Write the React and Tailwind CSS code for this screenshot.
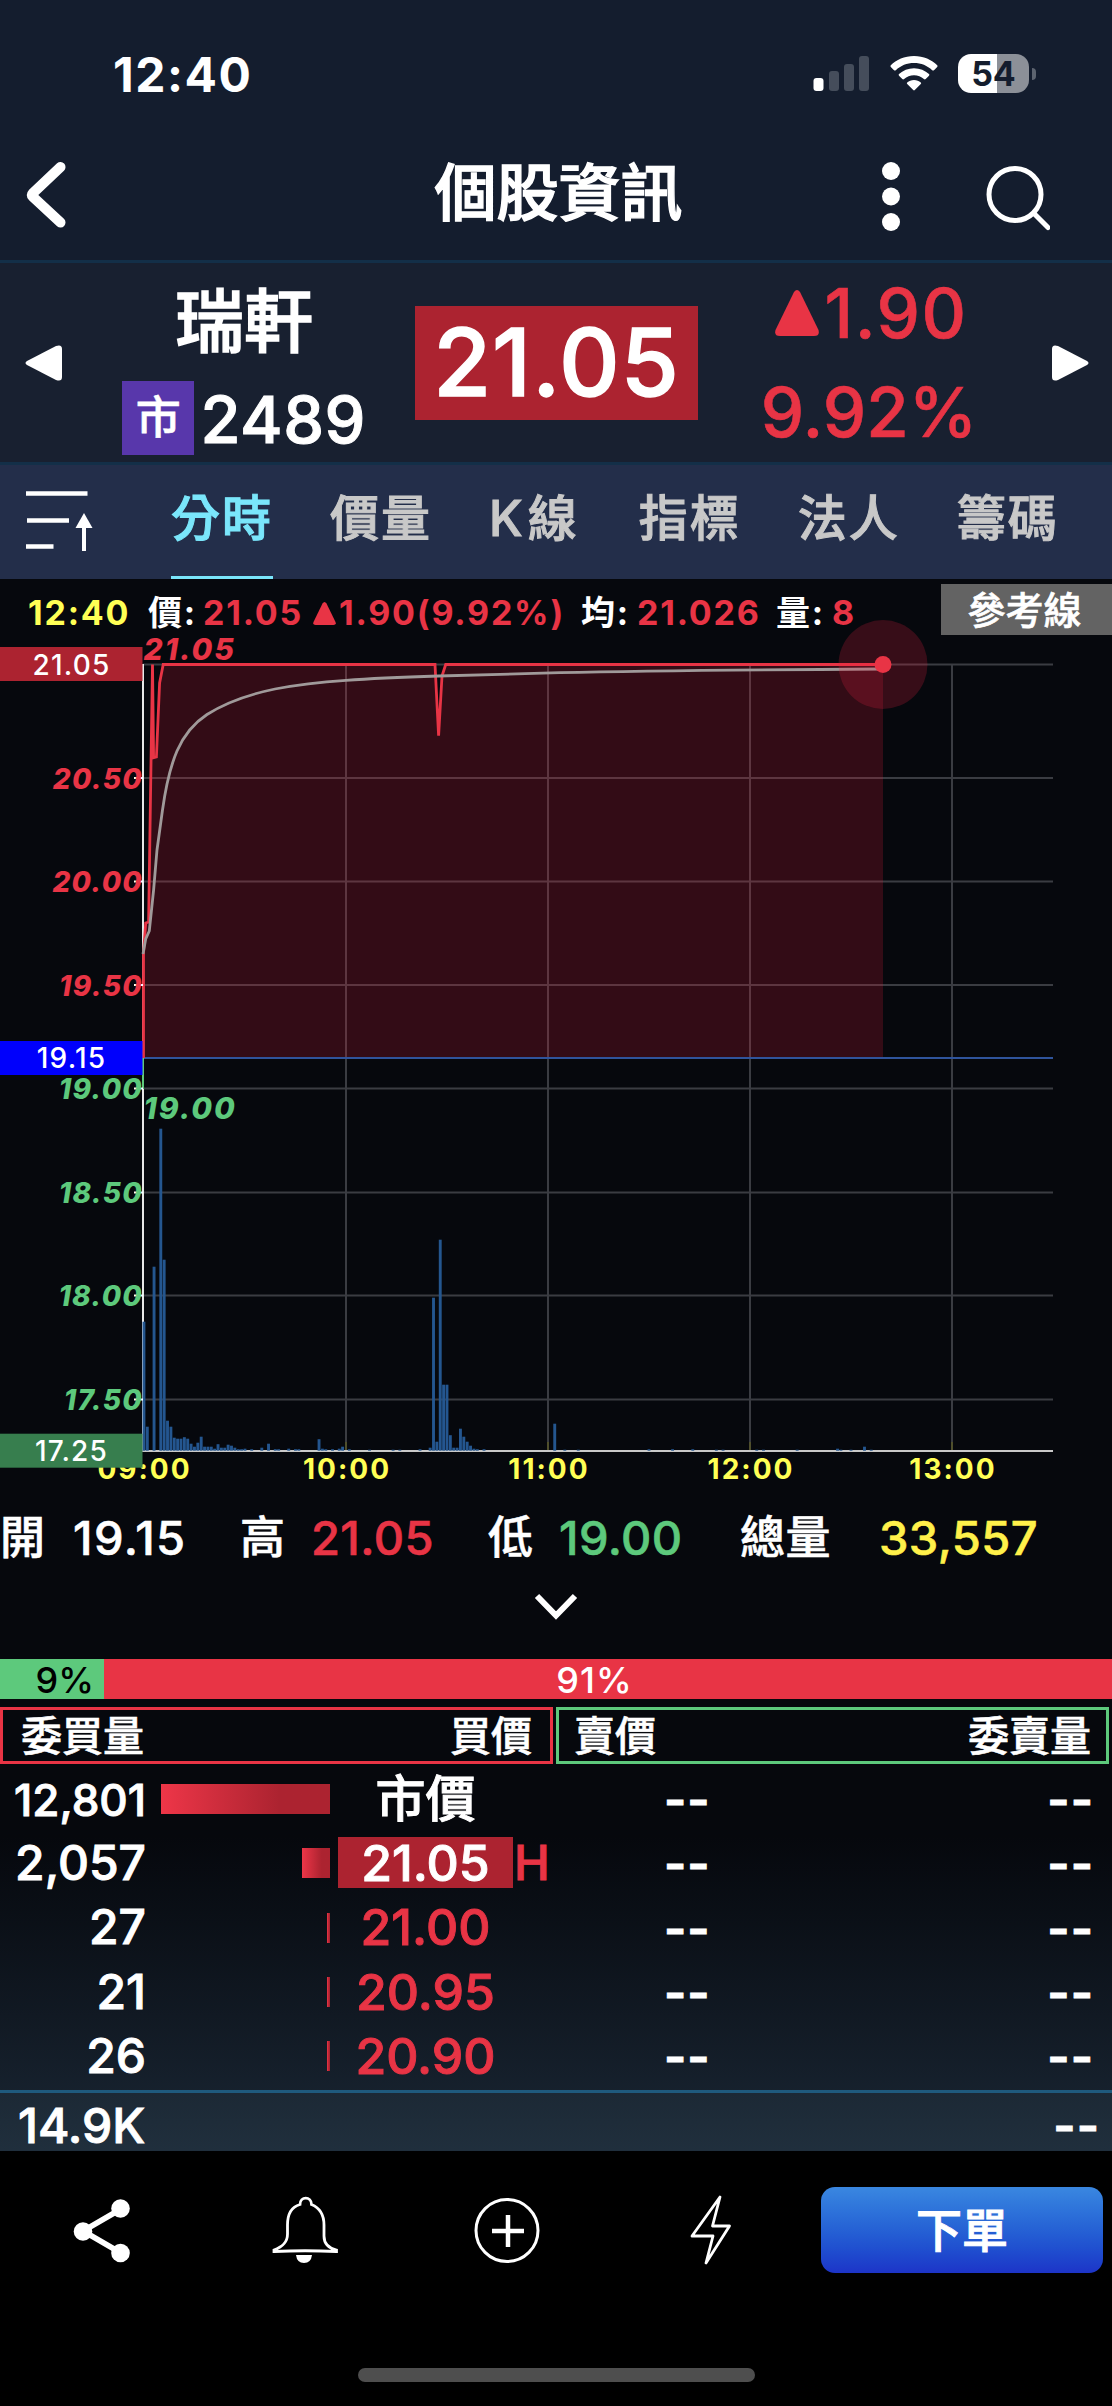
const minuteWidth = 3.367;
const baseline = 1450.7;

const gridRows = [
  { y: 664.5, label: null },
  { y: 778, label: '20.50', up: true },
  { y: 881.5, label: '20.00', up: true },
  { y: 985, label: '19.50', up: true },
  { y: 1088.5, label: '19.00' },
  { y: 1192.5, label: '18.50' },
  { y: 1295.5, label: '18.00' },
  { y: 1399.5, label: '17.50' },
];

const hours = [
  { x: 143.5, label: '09:00' },
  { x: 346, label: '10:00' },
  { x: 548, label: '11:00' },
  { x: 750, label: '12:00' },
  { x: 952, label: '13:00' },
];

// [minute after 09:00, bar height in px]
const volumes = [
  [0, 129], [1, 24], [3, 184], [5, 322], [6, 191], [7, 30], [8, 24], [9, 13], [10, 12], [11, 12],
  [12, 13.5], [13, 12], [14, 7], [15, 4], [16, 8], [17, 14], [18, 4], [19, 4], [20, 4], [21, 2],
  [22, 6.5], [23, 3], [24, 3], [25, 6], [26, 5], [27, 3], [28, 1.5], [29, 1.5], [30, 2], [32, 1.5],
  [35, 3], [37, 7], [39, 1.5], [40, 1.5], [43, 2], [45, 1.5], [46, 1.5], [52, 11.5], [53, 2], [54, 1.5],
  [56, 1.5], [58, 2], [59, 4], [61, 1.5], [67, 1], [74, 1], [76, 1], [82, 1.5], [85, 3], [86, 153],
  [87, 9], [88, 211], [89, 66], [90, 66], [91, 15.5], [92, 3], [93, 3], [94, 22], [95, 14], [96, 9],
  [97, 5], [98, 2], [99, 1.5], [101, 1.5], [122, 27], [125, 1], [129, 1], [150, 1.5], [157, 1.5],
  [163, 1.5], [170, 1], [172, 1], [182, 1], [184, 1], [194, 1], [206, 2], [207, 1], [210, 1], [214, 4],
  [216, 1],
];

const pricePoints =
  '143.5,1058 143.5,953 145.7,923 148.6,922 152.5,664.5 153.6,757.7 156.4,757 159.6,683 163.2,664.5 435,664.5 438.6,735.7 442,676 445.7,664.5 883,664.5';

const averagePath =
  'M143 954L145.7 939L149.3 931L153.6 890L157 850L162.5 810C166 785 171 765 177 751C184 735 194 723 207 714.5C222 705 246 695 275 689C298 684.5 320 682 346 680.3C378 678 408 677 438.6 676C480 674.5 520 673.5 560 672.7C630 671 700 670 883 669';

const tabs = ['分時', '價量', 'K線', '指標', '法人', '籌碼'];

const bids = [
  { volume: '12,801', price: '市價', bar: 'w-[169px]' },
  { volume: '2,057', price: '21.05', bar: 'w-[28px]', limit: true },
  { volume: '27', price: '21.00', bar: 'w-[3px]' },
  { volume: '21', price: '20.95', bar: 'w-[3px]' },
  { volume: '26', price: '20.90', bar: 'w-[3px]' },
];

function StatusBar() {
  return (
    <div className="flex h-[148px] items-start justify-between pl-[113px] pr-[76px]">
      <span className="mt-[46px] text-[48px] font-bold leading-[58px] tracking-[1.5px]">12:40</span>
      <div className="mt-[54px] flex items-start">
        <svg width="58" height="40" viewBox="0 0 58 40" className="mr-[19px]">
          <rect x="0.5" y="24" width="10" height="13" rx="3" fill="#fff" />
          <rect x="16" y="17" width="10" height="20" rx="3" fill="#454d5b" />
          <rect x="31" y="10" width="10" height="27" rx="3" fill="#454d5b" />
          <rect x="46" y="2" width="10" height="35" rx="3" fill="#454d5b" />
        </svg>
        <svg width="48" height="37" viewBox="0 0 48 37" className="mr-5">
          <path d="M24 2C14.5 2 6.200 5.800 0.800 11.200Q0 12 0.800 12.900L4 16.200Q4.900 17 5.800 16.200C10.600 11.600 16.900 9 24 9S37.400 11.600 42.200 16.200Q43.100 17 44 16.200L47.200 12.900Q48 12 47.200 11.200C41.800 5.800 33.500 2 24 2Z" fill="#fff" />
          <path d="M24 14.200C18.200 14.200 12.900 16.400 9 20Q8.200 20.900 9 21.700L12.300 25Q13.200 25.800 14.100 25C16.700 22.700 20.200 21.200 24 21.200S31.300 22.700 33.900 25Q34.800 25.800 35.700 25L39 21.700Q39.800 20.900 39 20C35.100 16.400 29.800 14.200 24 14.200Z" fill="#fff" />
          <path d="M24 26C21.300 26 19 26.900 17.200 28.400Q16.400 29.200 17.200 30L23.200 36Q24 36.800 24.800 36L30.800 30Q31.600 29.200 30.800 28.400C29 26.900 26.700 26 24 26Z" fill="#fff" />
        </svg>
        <div className="flex items-center gap-[3px]">
          <div className="flex h-[39px] w-[71px] items-center justify-center rounded-[13px] bg-linear-to-r from-white from-55% to-[#8c9098] to-55% text-[34px] font-bold text-[#141d2e]">
            54
          </div>
          <div className="h-3 w-1 rounded-r-full bg-[#5d6470]" />
        </div>
      </div>
    </div>
  );
}

function TitleBar() {
  return (
    <header className="flex h-[112px] items-center justify-between pb-4 pl-6 pr-[62px]">
      <svg width="200" height="72" viewBox="0 0 200 72">
        <path d="M36.500 7L8.500 33.500Q7 35 8.500 36.500L36.500 62.500" fill="none" stroke="#fff" strokeWidth="10" strokeLinecap="round" strokeLinejoin="round" />
      </svg>
      <h1 className="mb-1 ml-[13px] text-[62px] font-medium leading-none [-webkit-text-stroke:1.4px_currentColor]">個股資訊</h1>
      <svg width="170" height="72" viewBox="878 160 170 72">
        <circle cx="889" cy="171" r="9" fill="#fff" />
        <circle cx="889" cy="196.500" r="9" fill="#fff" />
        <circle cx="889" cy="222" r="9" fill="#fff" />
        <circle cx="1013" cy="194.500" r="26" fill="none" stroke="#fff" strokeWidth="5" />
        <path d="M1032 213.500L1046 227.500" stroke="#fff" strokeWidth="5" strokeLinecap="round" />
      </svg>
    </header>
  );
}

function Quote() {
  return (
    <section className="flex h-[205px] items-center border-y-3 border-[#132f48] bg-[#182030]">
      <svg width="37" height="36" viewBox="0 0 37 36" className="ml-[25px]">
        <path d="M2 16L31 1Q37 -1 37 4V32Q37 37 31 35L2 20Q-1 18 2 16Z" fill="#fff" />
      </svg>
      <div className="ml-[60px] flex w-[244px] flex-col items-center">
        <div className="pt-1.5 text-[69px] font-medium leading-[94px] [-webkit-text-stroke:1.4px_currentColor]">瑞軒</div>
        <div className="mt-2.5 flex w-full items-center">
          <span className="flex h-[74px] w-[74px] items-center justify-center bg-[#5837ab] text-[45px] font-medium [-webkit-text-stroke:0.6px_currentColor]">市</span>
          <span className="ml-[6px] pt-1 text-[65px] font-medium leading-[74px] tracking-[0.5px] [-webkit-text-stroke:1px_currentColor]">2489</span>
        </div>
      </div>
      <div className="ml-[49px] flex h-[114px] w-[283px] items-center justify-center bg-[#ac2330] text-[94px] font-medium tracking-[1px] [-webkit-text-stroke:1.4px_currentColor]">
        21.05
      </div>
      <div className="ml-[66px] flex w-[210px] flex-col items-center text-[69px] font-medium leading-[100px] text-[#e83445] [-webkit-text-stroke:0.6px_currentColor]">
        <div className="flex items-center gap-1.5 pl-1 tracking-[1.5px]">
          <svg width="44" height="46" viewBox="0 0 44 46">
            <path d="M19 2Q22 -2 25 2L43.500 40Q45 46 39 46H5Q-1 46 0.500 40Z" fill="#e83445" />
          </svg>
          1.90
        </div>
        <div className="-mt-[1px]">9.92%</div>
      </div>
      <svg width="37" height="36" viewBox="0 0 37 36" className="ml-[78px]">
        <path d="M35 16L6 1Q0 -1 0 4V32Q0 37 6 35L35 20Q38 18 35 16Z" fill="#fff" />
      </svg>
    </section>
  );
}

function Tabs() {
  return (
    <nav className="flex h-[114px] bg-[#232e4a]">
      <svg width="68" height="62" viewBox="25 490 68 62" className="ml-[25px] mt-[25px]">
        <path d="M26 493.500H87.500M27 520.500H69M26 546.500H53.500" stroke="#fff" strokeWidth="4.500" />
        <path d="M84 526V551" stroke="#fff" strokeWidth="4" />
        <path d="M84 513L92.500 528H75.500Z" fill="#fff" />
      </svg>
      <div className="ml-[78px] flex gap-[57px] text-[49px] font-medium text-[#c8c8c8] [-webkit-text-stroke:1px_currentColor]">
        {tabs.map((tab, i) => (
          <button
            key={tab}
            className={`h-[114px] border-b-3 pb-[3px] ${i === 2 ? 'tracking-[5px]' : 'tracking-[2px]'} ${
              i === 0 ? 'border-[#7ae6fb] text-[#7ae6fb]' : 'border-transparent'
            }`}
          >
            {tab}
          </button>
        ))}
      </div>
    </nav>
  );
}

function InfoRow() {
  return (
    <div className="flex h-[56px] justify-between pl-[28px] text-[34px] font-bold leading-[68px]">
      <div className="flex whitespace-nowrap tracking-[1.8px]">
        <span className="w-[120px] text-[#ffff55]">12:40</span>
        <span className="w-[55px]">價:</span>
        <span className="w-[110px] text-[#e83445]">21.05</span>
        <span className="flex w-[268px] text-[#e83445]">
          <svg width="23" height="23" viewBox="0 0 23 23" className="mr-[3px] mt-[23px]">
            <path d="M9.500 1.500Q11.500 -1.500 13.500 1.500L22.500 20Q23.500 23 20.500 23H2.500Q-0.500 23 0.500 20Z" fill="#e83445" />
          </svg>
          1.90(9.92%)
        </span>
        <span className="w-[56px]">均:</span>
        <span className="w-[139px] text-[#e83445]">21.026</span>
        <span className="w-[56px]">量:</span>
        <span className="text-[#e83445]">8</span>
      </div>
      <button className="mt-[5px] h-[51px] w-[171px] bg-[#636363] pr-1 text-[38px] font-medium leading-none [-webkit-text-stroke:0.6px_currentColor]">參考線</button>
    </div>
  );
}

function Chart() {
  return (
    <svg width="1112" height="865" viewBox="0 635 1112 865" className="block overflow-visible">
      {gridRows.map((row) => (
        <line key={row.y} x1="143" x2="1053" y1={row.y} y2={row.y} stroke="#3a3c42" strokeWidth="2" />
      ))}
      {hours.slice(1).map((hour) => (
        <g key={hour.label} strokeWidth="2">
          <line x1={hour.x} x2={hour.x} y1="664" y2="1450" stroke="#3a3c42" />
          <line x1={hour.x} x2={hour.x} y1="1442" y2="1450" stroke="#4f4f2c" />
        </g>
      ))}

      {/* Price area */}
      <polygon points={`${pricePoints} 883,1058`} fill="#eb1c3e" fillOpacity="0.2" />
      <line x1="143" x2="1053" y1="1058" y2="1058" stroke="#2f549c" strokeWidth="2" />

      {/* Axes */}
      <path d="M143 664V1451" stroke="#e8e8e8" strokeWidth="2" />
      <path d="M142 1451H1053" stroke="#c9c9c9" strokeWidth="2" />
      <path d="M143 1058V1089" stroke="#5dc97c" strokeWidth="2" />

      {volumes.map(([minute, height]) => (
        <rect
          key={minute}
          x={142.5 + minute * minuteWidth}
          y={baseline - height}
          width="2.900"
          height={height}
          fill="#24568f"
        />
      ))}

      <polyline points={pricePoints} fill="none" stroke="#e83445" strokeWidth="2.800" />
      <path d={averagePath} fill="none" stroke="#a09a9a" strokeWidth="2.800" />
      <circle cx="883" cy="664.500" r="44.500" fill="#e81f42" fillOpacity="0.220" />
      <circle cx="883" cy="664.500" r="8.500" fill="#e83445" />

      {/* Labels */}
      <g fontSize="28" fontWeight="800" fontStyle="italic" letterSpacing="1.300" textAnchor="end">
        {gridRows.filter((row) => row.label).map((row) => (
          <g key={row.label}>
            <line x1="134" x2="143" y1={row.y} y2={row.y} stroke="#fff" strokeWidth="2" />
            <text x="143" y={row.y + 10.5} fill={row.up ? '#e83445' : '#5dc97c'}>{row.label}</text>
          </g>
        ))}
      </g>
      <g fontSize="30" fontWeight="800" fontStyle="italic" letterSpacing="2">
        <text x="143.500" y="659.500" fill="#e83445">21.05</text>
        <text x="143.500" y="1118.500" fill="#5dc97c">19.00</text>
      </g>
      <g fontSize="28" fontWeight="700" letterSpacing="2" textAnchor="middle" fill="#ffff55">
        {hours.map((hour) => (
          <text key={hour.label} x={hour.x + 1} y="1478.500">{hour.label}</text>
        ))}
      </g>
      <rect y="647" width="142.500" height="34" fill="#ac2330" />
      <rect y="1041" width="142.500" height="34" fill="#0000fc" />
      <rect y="1433.700" width="142.500" height="34" fill="#377e4e" />
      <g fontSize="28" fontWeight="500" letterSpacing="1.200" textAnchor="middle" fill="#fff">
        <text x="71.500" y="674.500">21.05</text>
        <text x="71.500" y="1068">19.15</text>
        <text x="71.500" y="1461">17.25</text>
      </g>
    </svg>
  );
}

function Summary() {
  return (
    <section className="h-[159px]">
      <div className="flex h-[74px] items-center whitespace-nowrap text-[47px] font-medium leading-none tracking-[0.4px] [-webkit-text-stroke:0.6px_currentColor]">
        <span className="w-[73px] text-[45px]">開</span>
        <span className="w-[167px] tracking-[1.4px]">19.15</span>
        <span className="w-[71px] text-[45px]">高</span>
        <span className="w-[177px] text-[#e83445]">21.05</span>
        <span className="w-[71px] text-[45px]">低</span>
        <span className="w-[181px] text-[#5dc97c]">19.00</span>
        <span className="w-[139px] text-[45px]">總量</span>
        <span className="text-[#fff04a]">33,557</span>
      </div>
      <svg width="44" height="30" viewBox="534 1592 44 30" className="mx-auto mt-[18px]">
        <path d="M537 1596L556 1615.500L575 1596" fill="none" stroke="#fff" strokeWidth="6" />
      </svg>
    </section>
  );
}

function OrderBook() {
  return (
    <section>
      <div className="flex h-10 text-[36px] font-medium leading-[42px]">
        <div className="w-[104px] bg-[#5dc97c] pr-[10px] text-right text-black">9%</div>
        <div className="flex-1 bg-[#e83445] pr-[27px] text-center tracking-[1px]">91%</div>
      </div>
      <div className="mt-2 flex gap-[3px] pr-[3px] text-[41px] font-medium leading-[53px] [-webkit-text-stroke:0.6px_currentColor]">
        <div className="flex h-[57px] w-[553px] justify-between border-3 border-[#e83445] pl-[18px] pr-[18px]">
          <span>委買量</span>
          <span>買價</span>
        </div>
        <div className="flex h-[57px] flex-1 justify-between border-3 border-[#5dc97c] pl-[15px] pr-[15px]">
          <span>賣價</span>
          <span>委賣量</span>
        </div>
      </div>

      <div className="mt-[5px] h-[321px]">
        {bids.map((bid, i) => (
          <div
            key={bid.price}
            className="flex h-[64.3px] items-center text-[48px] font-medium leading-none [-webkit-text-stroke:0.9px_currentColor]"
          >
            <span className={`w-[146px] text-right ${i === 0 ? 'pb-[2px] text-[44px]' : 'pb-[5px]'}`}>{bid.volume}</span>
            <span className="flex w-[184px] justify-end pb-[4px]">
              <span className={`h-[30px] bg-linear-to-r from-[#ee3648] to-[#ac2330] to-70% ${bid.bar}`} />
            </span>
            <span
              className={`mb-[5px] ml-2 flex h-[51px] w-[175px] items-center justify-center text-[50px] ${
                bid.limit ? 'bg-[#ac2330]' : i === 0 ? '' : 'text-[#e83445]'
              }`}
            >
              {bid.price}
            </span>
            <span className="w-[151px] pb-[5px] pl-[1px] text-[#e83445]">{bid.limit ? 'H' : ''}</span>
            <span className="flex w-[430px] justify-between pb-[2px]">
              <Dashes />
              <Dashes />
            </span>
          </div>
        ))}
      </div>

      <div className="flex h-[62px] items-center justify-between border-t-3 border-[#1f5a7d] bg-[#9cc8e0]/5 pl-[18px] pr-[12px] pt-1.5 text-[48px] font-medium leading-none [-webkit-text-stroke:0.9px_currentColor]">
        <span>14.9K</span>
        <Dashes />
      </div>
    </section>
  );
}

function Dashes() {
  return <span className="text-[48px] font-semibold tracking-[1px]">--</span>;
}

function BottomBar() {
  return (
    <footer className="h-[255px] bg-black pt-[36px]">
      <div className="flex h-[86px] justify-between pl-[60px] pr-[9px]">
        <svg width="700" height="86" viewBox="60 2187 700 86" fill="none" stroke="#fff">
          {/* share */}
          <path d="M121 2209L83 2231L121 2253" strokeWidth="5.500" />
          <g fill="#fff" stroke="none">
            <circle cx="120.500" cy="2208.500" r="9.300" />
            <circle cx="83" cy="2231.500" r="9.300" />
            <circle cx="120.500" cy="2253" r="9.300" />
          </g>
          {/* bell */}
          <path d="M300 2204.500C300 2196 311.500 2196 311.500 2204.500C320 2208 324 2216 324 2225V2236C324 2243 328 2248 336.500 2250V2251.500Q305 2250 274 2251.500V2250C282 2247 287.500 2243 287.500 2234V2225C287.500 2215 291 2207 300 2204.500Z" strokeWidth="2.800" />
          <path d="M296 2255H312Q311 2263 304 2263T296 2255Z" fill="#fff" stroke="none" />
          {/* add */}
          <circle cx="507" cy="2230.500" r="31" strokeWidth="3" />
          <path d="M508 2215V2247M492 2231H524" strokeWidth="4.500" />
          {/* bolt */}
          <path d="M720 2197L692 2236H713L706 2263L729.500 2226H712.500Z" strokeWidth="2.800" strokeLinejoin="round" />
        </svg>
        <button className="w-[282px] rounded-[14px] bg-linear-to-b from-[#3a87e0] to-[#1d34c8] text-[46px] font-medium [-webkit-text-stroke:1px_currentColor]">下單</button>
      </div>
      <div className="mx-auto mt-[95px] h-[14px] w-[397px] rounded-full bg-[#4e4e4e]" />
    </footer>
  );
}

export default function App() {
  return (
    <div className="h-[2406px] w-[1112px] overflow-hidden bg-[#141d2e] font-['Inter','Noto_Sans_CJK_TC',sans-serif] text-white">
      <StatusBar />
      <TitleBar />
      <Quote />
      <Tabs />
      <main className="h-[1572px] bg-linear-to-b from-[#06080d] from-80% to-[#1a2735]">
        <InfoRow />
        <Chart />
        <Summary />
        <OrderBook />
      </main>
      <BottomBar />
    </div>
  );
}
